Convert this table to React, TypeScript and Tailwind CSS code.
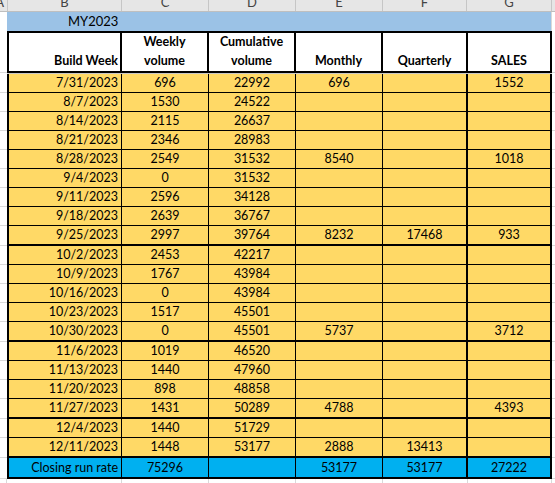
const rows: { d: string[]; thick?: boolean }[] = [
  { d: ["7/31/2023", "696", "22992", "696", "", "1552"] },
  { d: ["8/7/2023", "1530", "24522", "", "", ""] },
  { d: ["8/14/2023", "2115", "26637", "", "", ""] },
  { d: ["8/21/2023", "2346", "28983", "", "", ""] },
  { d: ["8/28/2023", "2549", "31532", "8540", "", "1018"] },
  { d: ["9/4/2023", "0", "31532", "", "", ""] },
  { d: ["9/11/2023", "2596", "34128", "", "", ""] },
  { d: ["9/18/2023", "2639", "36767", "", "", ""] },
  { d: ["9/25/2023", "2997", "39764", "8232", "17468", "933"], thick: true },
  { d: ["10/2/2023", "2453", "42217", "", "", ""] },
  { d: ["10/9/2023", "1767", "43984", "", "", ""] },
  { d: ["10/16/2023", "0", "43984", "", "", ""] },
  { d: ["10/23/2023", "1517", "45501", "", "", ""] },
  { d: ["10/30/2023", "0", "45501", "5737", "", "3712"], thick: true },
  { d: ["11/6/2023", "1019", "46520", "", "", ""] },
  { d: ["11/13/2023", "1440", "47960", "", "", ""] },
  { d: ["11/20/2023", "898", "48858", "", "", ""] },
  { d: ["11/27/2023", "1431", "50289", "4788", "", "4393"], thick: true },
  { d: ["12/4/2023", "1440", "51729", "", "", ""] },
  { d: ["12/11/2023", "1448", "53177", "2888", "13413", ""], thick: true },
]

const closing = ["Closing run rate", "75296", "", "53177", "53177", "27222"]

// widths of B..G, borders drawn inside each box
const cols = ["w-[115px]", "w-[87px]", "w-[87px]", "w-[87px]", "w-[85px]", "w-[84px]"]
const rightEdge = ["border-r", "border-r", "border-r", "border-r", "border-r-2", "border-r-2"]

function ColumnLetters() {
  const letters = [
    { l: "B", w: "w-[114px]" },
    { l: "C", w: "w-[87px]" },
    { l: "D", w: "w-[87px]" },
    { l: "E", w: "w-[87px]" },
    { l: "F", w: "w-[84px]" },
    { l: "G", w: "w-[85px]" },
  ]
  return (
    <div className="flex h-[12px] shrink-0 overflow-hidden border-b border-[#bfbfbf] bg-[#e6e6e6] text-[13px] leading-none text-[#444]">
      <div className="flex w-[8px] shrink-0 justify-end overflow-hidden border-r border-[#c6c6c6] pr-[3px]">
        <span className="-mt-[4px]">A</span>
      </div>
      {letters.map((c) => (
        <div key={c.l} className={`${c.w} flex shrink-0 justify-center border-r border-[#c6c6c6]`}>
          <span className="-mt-[4px]">{c.l}</span>
        </div>
      ))}
      <div className="flex-1" />
    </div>
  )
}

function DataRow({ cells, thick, bg }: { cells: string[]; thick?: boolean; bg: string }) {
  const bottom = thick ? "border-b-2" : "border-b"
  return (
    <div className={`flex shrink-0 ${thick ? "h-[20px]" : "h-[19px]"}`}>
      <div className="w-[7px] shrink-0 border-b border-[#d9d9d9] bg-white" />
      {cells.map((v, i) => (
        <div
          key={i}
          className={`${cols[i]} ${rightEdge[i]} ${bottom} ${i === 0 ? "border-l-2 justify-end pr-[3px]" : "justify-center"} ${bg} flex shrink-0 items-center border-black pt-[1px]`}
        >
          {v}
        </div>
      ))}
      <div className="flex-1 border-b border-[#d9d9d9] bg-white" />
    </div>
  )
}

export default function App() {
  return (
    <div className="flex h-[483px] w-[555px] flex-col overflow-hidden bg-white font-[family-name:Lato,sans-serif] text-[12.5px] text-black">
      <ColumnLetters />

      <div className="flex h-[19px] shrink-0">
        <div className="w-[7px] shrink-0" />
        <div className="flex w-[544px] shrink-0 items-center bg-[#9bc2e6] pl-[61px] pt-[1px] text-[13px]">MY2023</div>
        <div className="flex-1 border-l border-[#d9d9d9]" />
      </div>

      <div className="flex h-[42px] shrink-0">
        <div className="w-[7px] shrink-0 border-b border-[#d9d9d9]" />
        {["Build Week", "Weekly volume", "Cumulative volume", "Monthly", "Quarterly", "SALES"].map((h, i) => (
          <div
            key={h}
            className={`${cols[i]} ${i === 0 ? "border-l-2 justify-end pr-[2px] text-right" : "justify-center text-center"} flex shrink-0 items-end border-y-2 border-r-2 border-black px-[2px] pb-[1px] font-bold leading-[19px]`}
          >
            {h}
          </div>
        ))}
        <div className="flex-1 border-b border-[#d9d9d9]" />
      </div>

      <div className="flex h-px shrink-0">
        <div className="w-[7px] shrink-0" />
        <div className="w-[545px] shrink-0 bg-[#c8c8c8]" />
      </div>

      {rows.map((r) => (
        <DataRow key={r.d[0]} cells={r.d} thick={r.thick} bg="bg-[#ffd966]" />
      ))}

      <div className="flex h-[21px] shrink-0">
        <div className="w-[7px] shrink-0 border-b border-[#d9d9d9]" />
        {closing.map((v, i) => (
          <div
            key={i}
            className={`${cols[i]} ${rightEdge[i]} ${i === 0 ? "border-l-2 justify-end pr-[3px]" : "justify-center"} flex shrink-0 items-center border-b-2 border-black bg-[#00b0f0] pt-[1px]`}
          >
            {v}
          </div>
        ))}
        <div className="flex-1 border-b border-[#d9d9d9]" />
      </div>

      <div className="flex flex-1">
        <div className="w-[7px] shrink-0 border-r border-[#d9d9d9]" />
        {cols.map((w, i) => (
          <div key={i} className={`${w} shrink-0 border-r border-[#d9d9d9]`} />
        ))}
      </div>
    </div>
  )
}
